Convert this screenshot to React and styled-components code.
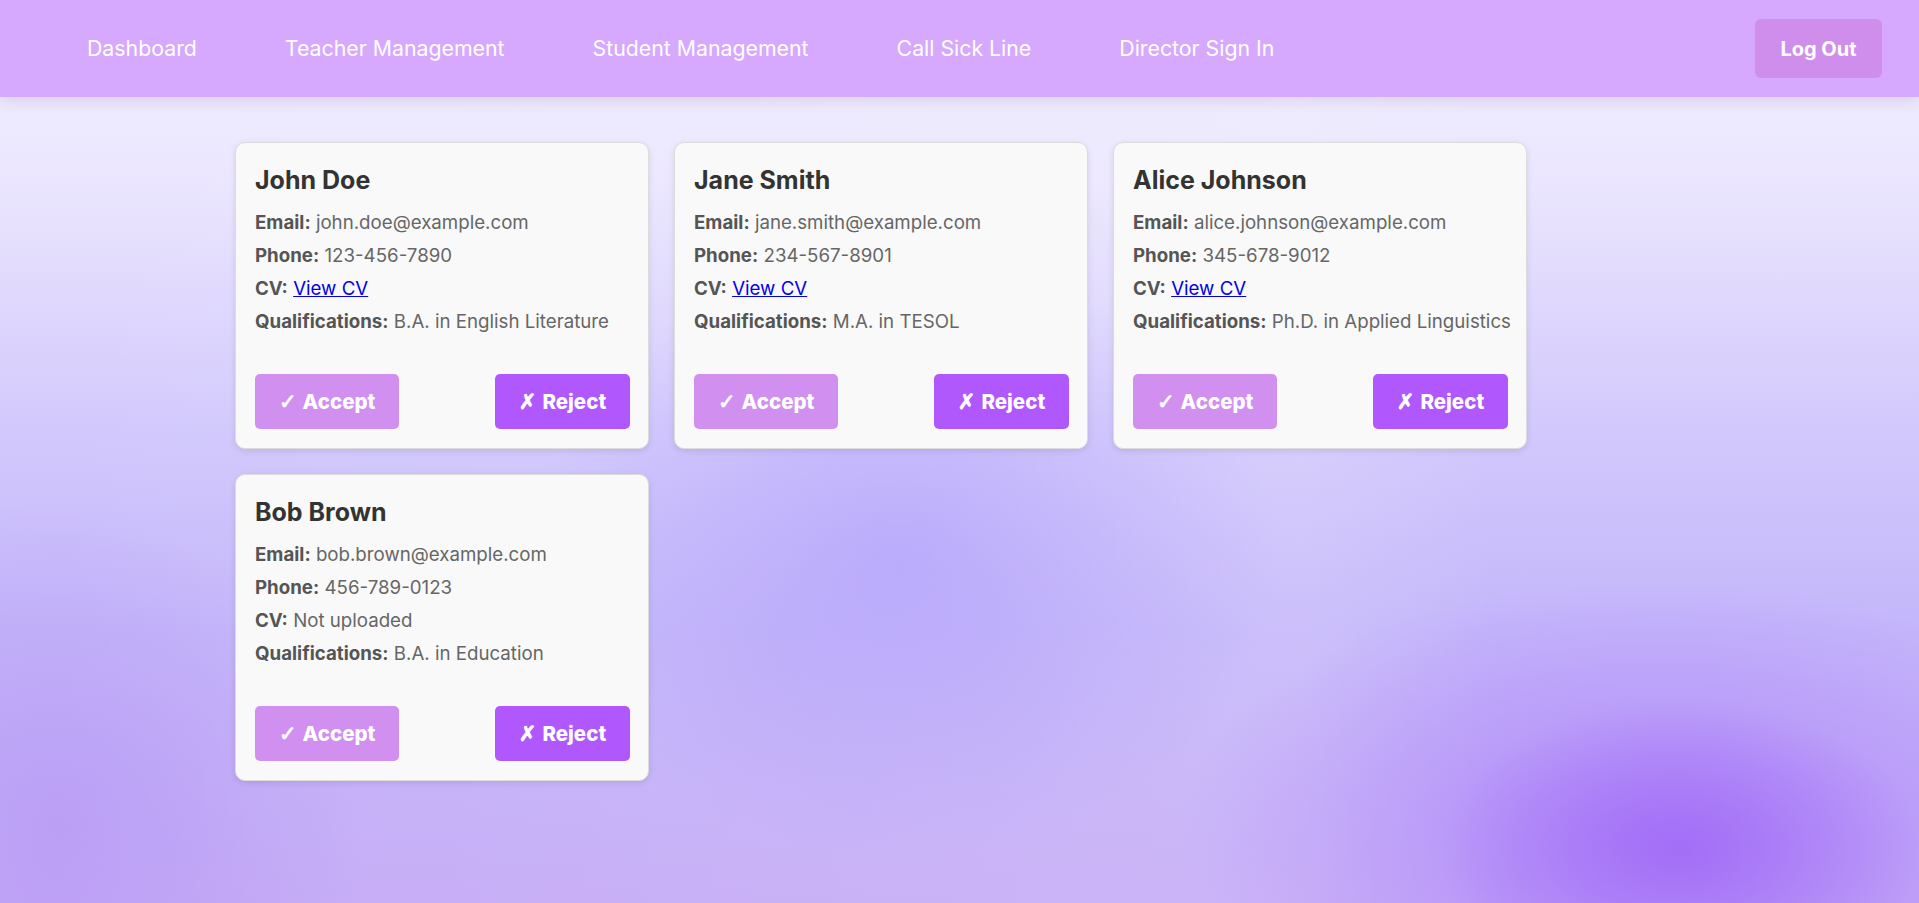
import React from "react";
import styled, { createGlobalStyle } from "styled-components";

const GlobalStyle = createGlobalStyle`
  body {
    margin: 0;
    font-family: "Inter", "Open Sans", sans-serif;
  }
`;

const Page = styled.div`
  min-height: 100vh;
  background:
    radial-gradient(ellipse 240px 150px at 1680px 850px, rgba(158, 100, 246, 0.75), rgba(158, 100, 246, 0) 100%),
    radial-gradient(ellipse 480px 250px at 1660px 830px, rgba(168, 122, 250, 0.7), rgba(168, 122, 250, 0) 100%),
    radial-gradient(ellipse 380px 300px at 900px 560px, rgba(168, 148, 252, 0.5), rgba(168, 148, 252, 0) 100%),
    radial-gradient(ellipse 300px 320px at 60px 820px, rgba(178, 146, 244, 0.55), rgba(178, 146, 244, 0) 100%),
    linear-gradient(90deg, rgba(255, 255, 255, 0) 0%, rgba(255, 255, 255, 0.12) 68%, rgba(255, 255, 255, 0) 78%),
    linear-gradient(180deg, #f0eefe 0%, #ebe6fe 20%, #d2c8fc 48%, #c4b6fa 70%, #c5abf6 100%);
`;

const NavBar = styled.nav`
  height: 97px;
  background: #d7a9fe;
  display: flex;
  align-items: center;
  padding: 0 37px 0 87px;
  box-shadow: 0 4px 14px rgba(60, 40, 90, 0.12);
  position: relative;
`;

const NavLinks = styled.div`
  display: flex;
  gap: 88px;
`;

const NavLink = styled.a`
  color: #fff;
  font-size: 21.3px;
  text-decoration: none;
  margin-top: -2px;
`;

const LogoutButton = styled.button`
  margin-left: auto;
  width: 127px;
  height: 59px;
  border: none;
  border-radius: 6px;
  background: #cf8eec;
  color: #fff;
  font-family: inherit;
  font-size: 20px;
  font-weight: 700;
`;

const Grid = styled.main`
  display: grid;
  grid-template-columns: repeat(3, 414px);
  gap: 25px 25px;
  padding: 45px 0 0 235px;
`;

const Card = styled.div`
  background: #f9f9f9;
  border: 1px solid #dcdcdc;
  border-radius: 10px;
  padding: 20px 18px 19px 19px;
  box-shadow: 0 2px 6px rgba(0, 0, 0, 0.1);
  display: flex;
  flex-direction: column;
`;

const Name = styled.h3`
  margin: 0 0 9px;
  font-size: 25px;
  line-height: 34px;
  font-weight: 700;
  color: #333;
`;

const Row = styled.p`
  margin: 0;
  font-size: 18.7px;
  line-height: 33px;
  color: #666;
  white-space: nowrap;

  strong {
    color: #555;
    font-weight: 650;
  }

  a {
    color: #0000ee;
  }
`;

const Actions = styled.div`
  display: flex;
  justify-content: space-between;
  margin-top: 36px;
`;

const ActionButton = styled.button`
  height: 55px;
  padding: 0 ${(p) => (p.$reject ? "22px" : "24px")};
  min-width: ${(p) => (p.$reject ? "135px" : "143px")};
  border: none;
  border-radius: 5px;
  background: ${(p) => (p.$reject ? "#b057fe" : "#d18ff0")};
  color: #fff;
  font-family: inherit;
  font-size: 20.5px;
  font-weight: 800;
  display: flex;
  align-items: center;
  justify-content: center;
  gap: 6px;
`;

const Mark = styled.span`
  font-family: "DejaVu Sans", sans-serif;
  font-weight: 700;
  font-size: 21px;
  -webkit-text-stroke: 0.8px #fff;
`;

const teachers = [
  {
    name: "John Doe",
    email: "john.doe@example.com",
    phone: "123-456-7890",
    cv: true,
    qualifications: "B.A. in English Literature",
  },
  {
    name: "Jane Smith",
    email: "jane.smith@example.com",
    phone: "234-567-8901",
    cv: true,
    qualifications: "M.A. in TESOL",
  },
  {
    name: "Alice Johnson",
    email: "alice.johnson@example.com",
    phone: "345-678-9012",
    cv: true,
    qualifications: "Ph.D. in Applied Linguistics",
  },
  {
    name: "Bob Brown",
    email: "bob.brown@example.com",
    phone: "456-789-0123",
    cv: false,
    qualifications: "B.A. in Education",
  },
];

const App = () => {
  return (
    <Page>
      <GlobalStyle />
      <NavBar>
        <NavLinks>
          <NavLink href="#">Dashboard</NavLink>
          <NavLink href="#">Teacher Management</NavLink>
          <NavLink href="#">Student Management</NavLink>
          <NavLink href="#">Call Sick Line</NavLink>
          <NavLink href="#">Director Sign In</NavLink>
        </NavLinks>
        <LogoutButton>Log Out</LogoutButton>
      </NavBar>

      <Grid>
        {teachers.map((t) => (
          <Card key={t.email}>
            <Name>{t.name}</Name>
            <Row>
              <strong>Email:</strong> {t.email}
            </Row>
            <Row>
              <strong>Phone:</strong> {t.phone}
            </Row>
            <Row>
              <strong>CV:</strong>{" "}
              {t.cv ? <a href="#">View CV</a> : "Not uploaded"}
            </Row>
            <Row>
              <strong>Qualifications:</strong> {t.qualifications}
            </Row>
            <Actions>
              <ActionButton>
                <Mark>✓</Mark>Accept
              </ActionButton>
              <ActionButton $reject>
                <Mark>✗</Mark>Reject
              </ActionButton>
            </Actions>
          </Card>
        ))}
      </Grid>
    </Page>
  );
};

export default App;
